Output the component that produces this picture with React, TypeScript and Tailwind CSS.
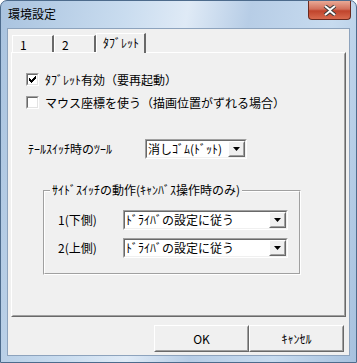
import React from "react";

const font = "font-['MS_UI_Gothic','Noto_Sans_CJK_JP',sans-serif]";

const Raised = ({ className = "", children }: { className?: string; children?: React.ReactNode }) => (
  <div className={`border border-t-white border-l-white border-r-[#696969] border-b-[#696969] ${className}`}>
    <div className="h-full w-full border border-t-[#f0f0f0] border-l-[#f0f0f0] border-r-[#a0a0a0] border-b-[#a0a0a0]">
      {children}
    </div>
  </div>
);

const Combo = ({ value, className = "" }: { value: string; className?: string }) => (
  <div className={`h-[20px] border border-t-[#a0a0a0] border-l-[#a0a0a0] border-r-white border-b-white ${className}`}>
    <div className="flex h-full items-center border border-t-[#696969] border-l-[#696969] border-r-[#f0f0f0] border-b-[#f0f0f0] bg-white">
      <span className="flex-1 pl-[1px] text-[12px] leading-none">{value}</span>
      <Raised className="h-[16px] w-[17px] bg-[#f0f0f0]">
        <div className="flex h-full items-center justify-center">
          <svg width="7" height="4" viewBox="0 0 7 4">
            <path d="M0 0h7L3.5 4z" fill="#000" />
          </svg>
        </div>
      </Raised>
    </div>
  </div>
);

const Check = ({ checked, label }: { checked?: boolean; label: string }) => (
  <div className="flex items-center gap-[6px]">
    <div className="h-[13px] w-[13px] border border-t-[#a0a0a0] border-l-[#a0a0a0] border-r-white border-b-white">
      <div className="flex h-full w-full items-center justify-center border border-t-[#696969] border-l-[#696969] border-r-[#e3e3e3] border-b-[#e3e3e3] bg-white">
        {checked && (
          <svg width="7" height="7" viewBox="0 0 7 7" shapeRendering="crispEdges">
            <path d="M6 0h1v3h-1zM5 1h1v3h-1zM4 2h1v3h-1zM3 3h1v3h-1zM2 4h1v3h-1zM1 3h1v3h-1zM0 2h1v3h-1z" fill="#000" />
          </svg>
        )}
      </div>
    </div>
    <span className="text-[12px] leading-none">{label}</span>
  </div>
);

export default function App() {
  return (
    <div className={`h-[363px] w-[357px] bg-white ${font} text-black`}>
      <div className="flex h-full w-full flex-col rounded-t-[7px] border border-[#4d6b8c] bg-[linear-gradient(100deg,#a9c3df_0%,#c9dcef_30%,#dfeaf6_45%,#b7cde6_60%,#c7dbef_80%,#a7c1de_100%)]">
        <div className="flex h-[27px] shrink-0 items-start justify-between">
          <span className="ml-[7px] mt-[7px] text-[12px] leading-none">環境設定</span>
          <div className="mr-[5px] flex h-[19px] w-[43px] items-center justify-center rounded-b-[4px] border border-t-0 border-[#6b2a1f] bg-[linear-gradient(#e9a996_0%,#d2705b_45%,#c0442c_55%,#d86a4e_100%)]">
            <svg width="14" height="11" viewBox="0 0 14 11">
              <path d="M2 1l5 4 5-4M2 10l5-4 5 4" stroke="#3a3a3a" strokeWidth="4" fill="none" />
              <path d="M2 1l5 4 5-4M2 10l5-4 5 4" stroke="#fff" strokeWidth="2" fill="none" />
            </svg>
          </div>
        </div>
        <div className="mx-[6px] mb-[6px] flex flex-1 flex-col border border-[#8da3bd] bg-[#f0f0f0]">
          <div className="ml-[3px] mr-[3px] mt-[4px]">
            <div className="flex h-[19px] items-end pl-[1px]">
              <div className="h-[17px] w-[42px] border-l border-t border-white border-r-[2px] border-r-[#696969] pl-[7px] pt-[3px] text-[12px] leading-none">1</div>
              <div className="h-[17px] w-[42px] border-l border-t border-white border-r-[2px] border-r-[#696969] pl-[7px] pt-[3px] text-[12px] leading-none">2</div>
              <div className="relative z-10 -mb-[1px] h-[20px] w-[50px] border-l border-t border-white border-r-[2px] border-r-[#696969] bg-[#f0f0f0] pl-[6px] pt-[3px] text-[12px] leading-none">ﾀﾌﾞﾚｯﾄ</div>
            </div>
            <Raised className="h-[265px] w-[335px]">
              <div className="flex flex-col pl-[13px] pt-[19px]">
                <Check checked label="ﾀﾌﾞﾚｯﾄ有効（要再起動）" />
                <div className="mt-[10px]">
                  <Check label="マウス座標を使う（描画位置がずれる場合）" />
                </div>
                <div className="mt-[30px] flex items-center">
                  <span className="ml-[2px] w-[117px] text-[12px] leading-none">ﾃｰﾙｽｲｯﾁ時のﾂｰﾙ</span>
                  <Combo value="消しｺﾞﾑ(ﾄﾞｯﾄ)" className="w-[102px]" />
                </div>
                <div className="relative ml-[17px] mt-[31px] h-[85px] w-[258px] border border-t-[#a0a0a0] border-l-[#a0a0a0] border-r-white border-b-white">
                  <div className="h-full w-full border border-t-white border-l-white border-r-[#a0a0a0] border-b-[#a0a0a0]">
                    <span className="absolute -top-[7px] left-[6px] bg-[#f0f0f0] px-[2px] text-[12px] leading-none">ｻｲﾄﾞｽｲｯﾁの動作(ｷｬﾝﾊﾞｽ操作時のみ)</span>
                    <div className="flex flex-col gap-[8px] pl-[13px] pt-[18px]">
                      <div className="flex items-center">
                        <span className="w-[65px] text-[12px] leading-none">1(下側)</span>
                        <Combo value="ﾄﾞﾗｲﾊﾞの設定に従う" className="w-[165px]" />
                      </div>
                      <div className="flex items-center">
                        <span className="w-[65px] text-[12px] leading-none">2(上側)</span>
                        <Combo value="ﾄﾞﾗｲﾊﾞの設定に従う" className="w-[165px]" />
                      </div>
                    </div>
                  </div>
                </div>
              </div>
            </Raised>
          </div>
          <div className="mr-[5px] mt-[8px] flex justify-end">
            <Raised className="h-[27px] w-[95px] bg-[#f0f0f0]">
              <div className="flex h-full items-center justify-center text-[12px] leading-none">OK</div>
            </Raised>
            <Raised className="h-[27px] w-[95px] bg-[#f0f0f0]">
              <div className="flex h-full items-center justify-center text-[12px] leading-none">ｷｬﾝｾﾙ</div>
            </Raised>
          </div>
        </div>
      </div>
    </div>
  );
}
